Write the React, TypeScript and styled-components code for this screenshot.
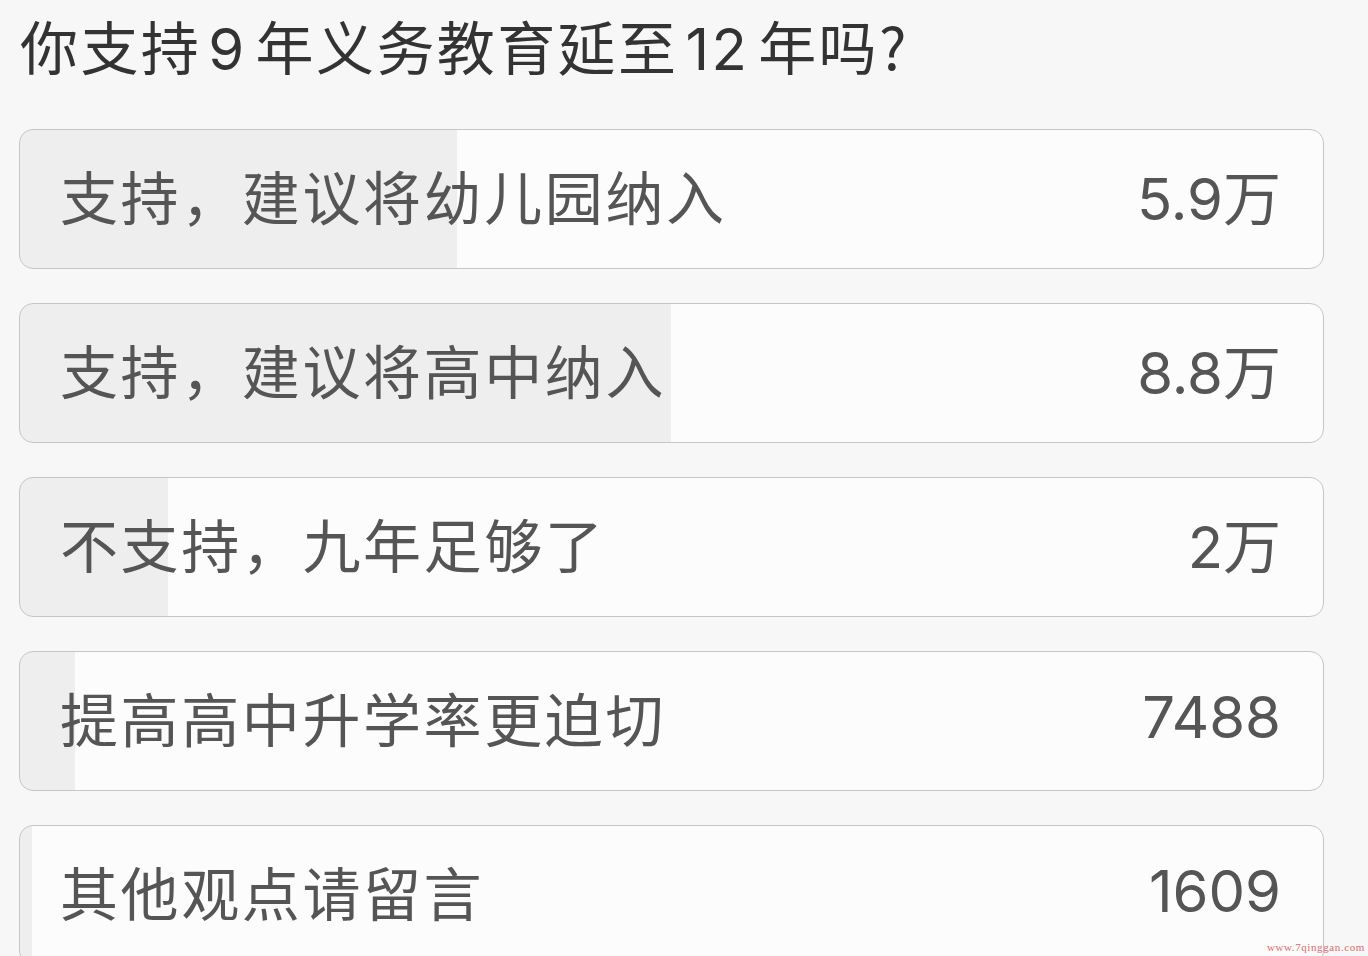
import React from "react";
import styled, { createGlobalStyle } from "styled-components";

interface PollOption {
  id: number;
  label: string;
  display: string;
  votes: number;
}

const options: PollOption[] = [
  { id: 1, label: "支持，建议将幼儿园纳入", display: "5.9万", votes: 59000 },
  { id: 2, label: "支持，建议将高中纳入", display: "8.8万", votes: 88000 },
  { id: 3, label: "不支持，九年足够了", display: "2万", votes: 20000 },
  { id: 4, label: "提高高中升学率更迫切", display: "7488", votes: 7488 },
  { id: 5, label: "其他观点请留言", display: "1609", votes: 1609 },
];

const GlobalStyle = createGlobalStyle`
  html, body {
    margin: 0;
    padding: 0;
    background: #f7f7f8;
    overflow: hidden;
  }
  body {
    font-family: "Noto Sans CJK SC", "Noto Sans", sans-serif;
  }
`;

const Page = styled.div`
  position: relative;
  width: 1368px;
  height: 956px;
  box-sizing: border-box;
  padding: 9px 44px 0 19px;
  overflow: hidden;
`;

const Title = styled.h1`
  margin: 0 0 0 1px;
  font-size: 58px;
  line-height: 72px;
  font-weight: 400;
  color: #333;
  letter-spacing: 2.4px;
  white-space: nowrap;
`;

const Num = styled.span`
  font-family: Inter, "Liberation Sans", sans-serif;
  margin: 0 9px 0 7px;
`;

const List = styled.div`
  display: flex;
  flex-direction: column;
  gap: 34px;
  margin-top: 44px;
`;

const Card = styled.div<{ $pct: number }>`
  height: 140px;
  box-sizing: border-box;
  border: 1px solid #c6c6c8;
  border-radius: 14px;
  background: linear-gradient(
    to right,
    #eeeeef 0,
    #eeeeef ${(p) => p.$pct}%,
    #fcfcfc ${(p) => p.$pct}%,
    #fcfcfc 100%
  );
  display: flex;
  align-items: center;
  justify-content: space-between;
  padding: 0 42px 8px 40px;
  flex-shrink: 0;
`;

const Label = styled.span`
  font-size: 58px;
  letter-spacing: 2.6px;
  color: #555;
  white-space: nowrap;
`;

const Count = styled.span`
  font-family: Inter, "Noto Sans CJK SC", sans-serif;
  font-size: 58px;
  color: #555;
  white-space: nowrap;
`;

const Watermark = styled.div`
  position: absolute;
  right: 3px;
  bottom: 3px;
  font-family: "Liberation Serif", serif;
  font-size: 11px;
  color: #e06a6a;
  letter-spacing: 0.6px;
`;

export default function App() {
  const total = options.reduce((sum, o) => sum + o.votes, 0);

  return (
    <>
      <GlobalStyle />
      <Page>
        <Title>
          你支持<Num>9</Num>年义务教育延至<Num>12</Num>年吗?
        </Title>
        <List>
          {options.map((o) => (
            <Card key={o.id} $pct={(o.votes / total) * 100}>
              <Label>{o.label}</Label>
              <Count>{o.display}</Count>
            </Card>
          ))}
        </List>
        <Watermark>www.7qinggan.com</Watermark>
      </Page>
    </>
  );
}
